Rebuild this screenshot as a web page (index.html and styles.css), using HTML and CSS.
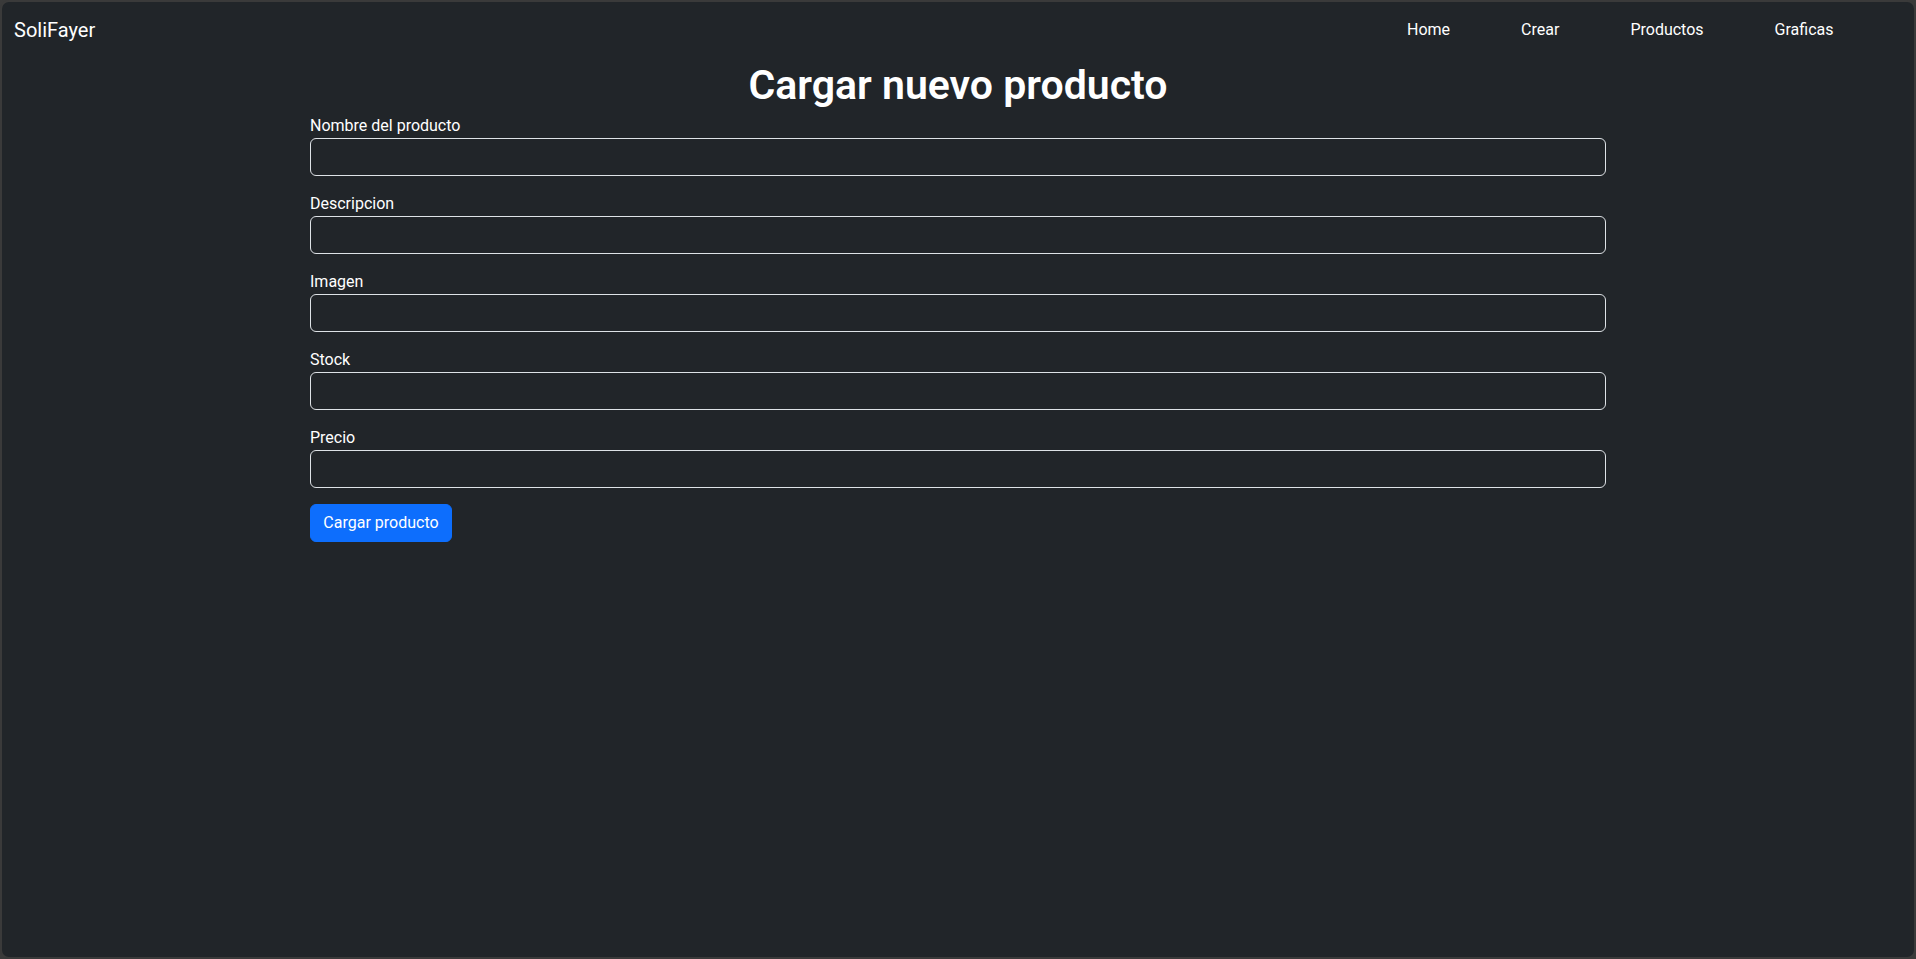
FILE: index.html
```html
<!DOCTYPE html>
<html lang="es">
<head>
<meta charset="utf-8">
<title>SoliFayer</title>
<link rel="stylesheet" href="styles.css">
</head>
<body>
<div class="window">
  <nav class="navbar">
    <a class="brand" href="#">SoliFayer</a>
    <ul class="nav-links">
      <li><a href="#">Home</a></li>
      <li><a href="#">Crear</a></li>
      <li><a href="#">Productos</a></li>
      <li><a href="#">Graficas</a></li>
    </ul>
  </nav>
  <main class="container">
    <h1 class="title">Cargar nuevo producto</h1>
    <form class="form">
      <div class="group">
        <label class="label" for="nombre">Nombre del producto</label>
        <input class="input" id="nombre" type="text">
      </div>
      <div class="group">
        <label class="label" for="desc">Descripcion</label>
        <input class="input" id="desc" type="text">
      </div>
      <div class="group">
        <label class="label" for="img">Imagen</label>
        <input class="input" id="img" type="text">
      </div>
      <div class="group">
        <label class="label" for="stock">Stock</label>
        <input class="input" id="stock" type="text">
      </div>
      <div class="group">
        <label class="label" for="precio">Precio</label>
        <input class="input" id="precio" type="text">
      </div>
      <button class="btn" type="button">Cargar producto</button>
    </form>
  </main>
</div>
</body>
</html>
```
FILE: styles.css
```css
* { box-sizing: border-box; }
html, body {
  margin: 0;
  padding: 0;
  height: 100%;
  background: #3a3a3a;
}
body {
  font-family: "Segoe UI", Roboto, "Open Sans", sans-serif;
  font-size: 16px;
  line-height: 1.5;
  color: #dee2e6;
}
.window {
  height: 959px;
  background: #212529;
  border: 2px solid #3a3a3a;
  border-radius: 9px;
  overflow: hidden;
}
.navbar {
  display: flex;
  align-items: center;
  justify-content: space-between;
  padding: 8px 12px;
}
.brand {
  font-size: 20px;
  line-height: 30px;
  padding: 5px 0;
  color: #fff;
  text-decoration: none;
}
.nav-links {
  display: flex;
  list-style: none;
  margin: 0 33px 0 0;
  padding: 0;
}
.nav-links a {
  display: block;
  padding: 8px 35.5px;
  color: #fff;
  font-size: 16px;
  text-decoration: none;
}
.container {
  width: 1320px;
  margin: 0 auto;
  padding: 0 12px;
}
.title {
  margin: 2px 0 4px;
  text-align: center;
  font-size: 41px;
  line-height: 50px;
  font-weight: 600;
  color: #fff;
}
.group {
  margin-bottom: 16px;
}
.label {
  display: block;
  font-size: 16px;
  line-height: 24px;
  color: #fff;
}
.input {
  display: block;
  width: 100%;
  height: 38px;
  padding: 6px 12px;
  background: #212529;
  border: 1px solid #dee2e6;
  border-radius: 6px;
  color: #dee2e6;
  font: inherit;
}
.btn {
  display: inline-block;
  width: 142px;
  height: 38px;
  padding: 6px 12px;
  background: #0d6efd;
  border: 1px solid #0d6efd;
  border-radius: 6px;
  color: #fff;
  font-family: inherit;
  font-size: 16px;
  line-height: 24px;
}
```
